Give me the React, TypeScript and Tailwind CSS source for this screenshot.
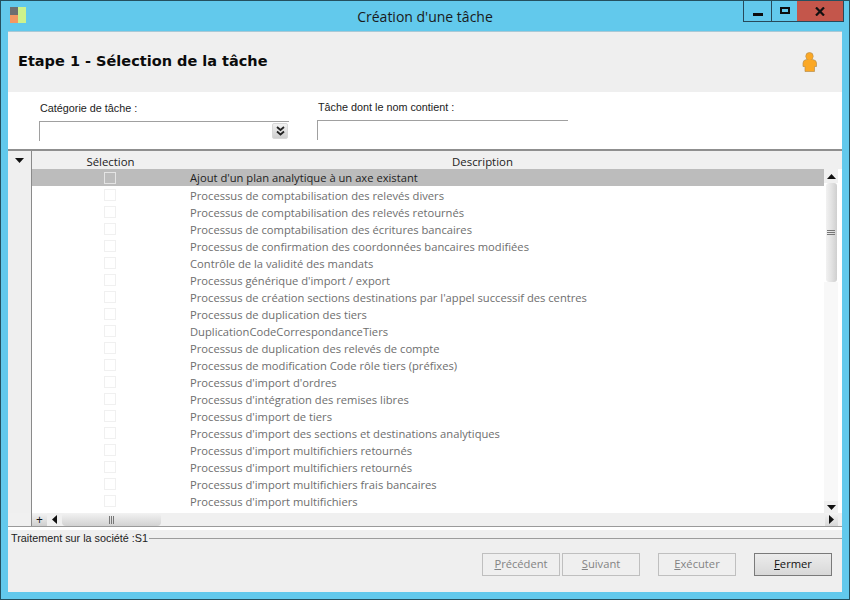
import React from "react"

const rows = [
  "Ajout d'un plan analytique à un axe existant",
  "Processus de comptabilisation des relevés divers",
  "Processus de comptabilisation des relevés retournés",
  "Processus de comptabilisation des écritures bancaires",
  "Processus de confirmation des coordonnées bancaires modifiées",
  "Contrôle de la validité des mandats",
  "Processus générique d'import / export",
  "Processus de création sections destinations par l'appel successif des centres",
  "Processus de duplication des tiers",
  "DuplicationCodeCorrespondanceTiers",
  "Processus de duplication des relevés de compte",
  "Processus de modification Code rôle tiers (préfixes)",
  "Processus d'import d'ordres",
  "Processus d'intégration des remises libres",
  "Processus d'import de tiers",
  "Processus d'import des sections et destinations analytiques",
  "Processus d'import multifichiers retournés",
  "Processus d'import multifichiers retournés",
  "Processus d'import multifichiers frais bancaires",
  "Processus d'import multifichiers",
]

function WizardButton({ label, rest, disabled }: { label: string; rest: string; disabled?: boolean }) {
  return (
    <button
      className={
        disabled
          ? "w-[78px] h-[23px] border border-[#bfbfbf] bg-[#efefef] text-[#838383] text-[11.2px]"
          : "w-[78px] h-[23px] border border-[#7a7a7a] bg-gradient-to-b from-[#ececec] to-[#d8d8d8] text-[#111] text-[11.2px]"
      }
    >
      <span className="underline">{label}</span>
      {rest}
    </button>
  )
}

export default function App() {
  return (
    <div className="w-[850px] h-[600px] bg-[#62c9ec] border border-[#24505f] flex flex-col overflow-hidden font-['Open_Sans',sans-serif] relative">
      {/* barre de titre */}
      <div className="h-[30px] flex items-start relative shrink-0">
        <svg width="16" height="16" viewBox="0 0 16 16" className="ml-[9px] mt-[6px]">
          <rect x="0" y="0" width="8" height="8" fill="#6f6f70" />
          <rect x="0" y="8" width="8" height="8" fill="#f49862" />
          <rect x="8" y="0" width="8" height="16" fill="#cdf28c" />
        </svg>
        <div className="flex-1 text-center text-[14px] text-[#1a1a1a] mt-[5px] pr-[25px]">
          Création d'une tâche
        </div>
        <div className="absolute right-[5px] top-0 flex h-[21px] border border-t-0 border-[#27495a]">
          <div className="w-[27px] border-r border-[#27495a] box-content flex items-center justify-center">
            <div className="w-[10px] h-[3px] bg-[#0d0d0d] mt-[6px]" />
          </div>
          <div className="w-[25px] flex items-center justify-center">
            <div className="w-[10px] h-[7px] border-2 border-[#0d0d0d] -mt-[1px]" />
          </div>
          <div className="w-[46px] bg-[#c4564b] flex items-center justify-center">
            <svg width="10" height="9" viewBox="0 0 10 9">
              <path d="M1 0.5 L9 8.5 M9 0.5 L1 8.5" stroke="#111" strokeWidth="2.2" />
            </svg>
          </div>
        </div>
      </div>

      {/* contenu */}
      <div className="mx-[7px] h-[561px] flex flex-col bg-[#efefef] border-t border-[#a9c9d6]">
        <div className="h-[60px] flex items-center justify-between pl-[10px] pr-[24px] shrink-0">
          <div className="text-[14.5px] font-bold text-[#0b0b0b] font-['DejaVu_Sans',sans-serif]">
            Etape 1 - Sélection de la tâche
          </div>
          <svg width="16" height="20" viewBox="0 0 16 20" className="-mt-[1px]">
            <circle cx="7.5" cy="4.2" r="3.7" fill="#fba825" stroke="#b98f4e" strokeWidth="0.7" />
            <path d="M4.500 7.500 H10.500 Q14.500 8 14.500 11 V14.500 L12.500 14.500 V19.500 H3 V14.500 L1 14.500 V11 Q1 8 4.500 7.500 Z" fill="#fba825" stroke="#b98f4e" strokeWidth="0.7" />
            <circle cx="7.5" cy="5" r="3" fill="#fba825" />
          </svg>
        </div>

        <div className="h-[57px] bg-white flex pl-[31px] gap-[28px] shrink-0">
          <div className="w-[250px] flex flex-col">
            <div className="font-['Liberation_Sans',sans-serif] text-[10.8px] text-[#222] pl-[1px] mt-[8px] h-[21px]">Catégorie de tâche :</div>
            <div className="h-[20px] border-t border-l border-[#a0a0a0] flex justify-end pr-[1px] pt-[1px]">
              <div className="w-[16px] h-[16px] bg-gradient-to-b from-[#f2f2f2] to-[#cfcfcf] border border-[#d8d8d8] rounded-[2px] flex items-center justify-center">
                <svg width="9" height="10" viewBox="0 0 9 10">
                  <path d="M1 1 L4.500 4 L8 1 M1 5.500 L4.500 8.500 L8 5.500" fill="none" stroke="#222" strokeWidth="1.8" />
                </svg>
              </div>
            </div>
          </div>
          <div className="w-[251px] flex flex-col">
            <div className="font-['Liberation_Sans',sans-serif] text-[10.8px] text-[#222] pl-[1px] mt-[7px] h-[21px]">Tâche dont le nom contient :</div>
            <div className="h-[20px] border-t border-l border-[#a0a0a0]" />
          </div>
        </div>

        {/* grille */}
        <div className="h-[381px] shrink-0 border-t-2 border-[#8f8f8f] bg-white flex flex-col">
          <div className="flex flex-1 min-h-0">
            <div className="w-[24px] shrink-0 bg-[#efefef] border-r border-[#8a8a8a] flex justify-center pt-[7px]">
              <svg width="9" height="5" viewBox="0 0 9 5">
                <path d="M0 0 H9 L4.500 5 Z" fill="#111" />
              </svg>
            </div>
            <div className="flex-1 min-w-0 flex flex-col">
              <div className="h-[18px] bg-[#f0f0f0] flex text-[11.4px] text-[#222] shrink-0">
                <div className="w-[157px] text-center pt-[2px]">Sélection</div>
                <div className="flex-1 text-center pt-[2px] pr-[66px]">Description</div>
              </div>
              <div className="flex flex-1 min-h-0 pr-[4px]">
                <div className="flex-1 min-w-0">
                  {rows.map((row, i) => (
                    <div
                      key={i}
                      className={
                        i === 0
                          ? "h-[17px] flex items-center bg-[#bcbcbc] text-[#1e1e1e] text-[11.2px]"
                          : "h-[17px] flex items-center text-[#6e6e6e] text-[11.2px]"
                      }
                    >
                      <div className="w-[158px] pr-[2px] shrink-0 flex justify-center">
                        <div className={i === 0 ? "w-[12px] h-[12px] border border-[#e4e4e4]" : "w-[12px] h-[12px] border border-[#f0f0f0]"} />
                      </div>
                      <div className={i === 0 ? "whitespace-nowrap pt-[1px]" : "whitespace-nowrap pt-[3px]"}>{row}</div>
                    </div>
                  ))}
                </div>
                <div className="w-[14px] shrink-0 bg-white flex flex-col items-center">
                  <div className="h-[14px] w-full bg-[#f0f0f0] flex items-center justify-center">
                    <svg width="9" height="5" viewBox="0 0 9 5">
                      <path d="M0 5 H9 L4.500 0 Z" fill="#111" />
                    </svg>
                  </div>
                  <div className="w-[11px] h-[99px] bg-gradient-to-r from-[#f2f2f2] via-[#e2e2e2] to-[#cfcfcf] rounded-[3px] flex flex-col items-center justify-center gap-[1px]">
                    <div className="w-[8px] h-px bg-[#777]" />
                    <div className="w-[8px] h-px bg-[#777]" />
                    <div className="w-[8px] h-px bg-[#777]" />
                  </div>
                  <div className="flex-1 w-full bg-[#f8f8f8]" />
                  <div className="h-[12px] w-full bg-[#f0f0f0] flex items-center justify-center">
                    <svg width="9" height="5" viewBox="0 0 9 5">
                      <path d="M0 0 H9 L4.500 5 Z" fill="#111" />
                    </svg>
                  </div>
                </div>
              </div>
            </div>
          </div>
          <div className="h-[14px] shrink-0 flex bg-[#f0f0f0] border-b border-[#9a9a9a]">
            <div className="w-[24px] border-r border-[#8a8a8a]" />
            <div className="w-[15px] text-[12px] leading-[13px] text-center text-[#111] bg-gradient-to-b from-[#f4f4f4] to-[#cfcfcf]">+</div>
            <div className="w-[15px] flex items-center justify-center">
              <svg width="5" height="9" viewBox="0 0 5 9">
                <path d="M5 0 V9 L0 4.500 Z" fill="#111" />
              </svg>
            </div>
            <div className="w-[99px] bg-gradient-to-b from-[#f2f2f2] to-[#d2d2d2] rounded-[4px] flex items-center justify-center gap-[1px]">
              <div className="h-[8px] w-px bg-[#777]" />
              <div className="h-[8px] w-px bg-[#777]" />
              <div className="h-[8px] w-px bg-[#777]" />
            </div>
            <div className="flex-1" />
            <div className="w-[13px] mr-[4px] bg-gradient-to-b from-[#f4f4f4] to-[#d8d8d8] flex items-center justify-center">
              <svg width="5" height="9" viewBox="0 0 5 9">
                <path d="M0 0 V9 L5 4.500 Z" fill="#111" />
              </svg>
            </div>
          </div>
          <div className="h-[3px] shrink-0 bg-white" />
        </div>

        {/* pied */}
        <div className="flex-1 flex flex-col">
          <div className="flex items-center h-[16px] pl-[3px]">
            <span className="font-['Liberation_Sans',sans-serif] text-[10.8px] text-[#222] whitespace-nowrap">Traitement sur la société :S1</span>
            <div className="flex-1 h-px bg-[#9c9c9c] ml-[1px]" />
          </div>
          <div className="flex justify-end pr-[10px] mt-[7px]">
            <WizardButton label="P" rest="récédent" disabled />
            <div className="w-[2px]" />
            <WizardButton label="S" rest="uivant" disabled />
            <div className="w-[18px]" />
            <WizardButton label="E" rest="xécuter" disabled />
            <div className="w-[18px]" />
            <WizardButton label="F" rest="ermer" />
          </div>
        </div>
      </div>
    </div>
  )
}
